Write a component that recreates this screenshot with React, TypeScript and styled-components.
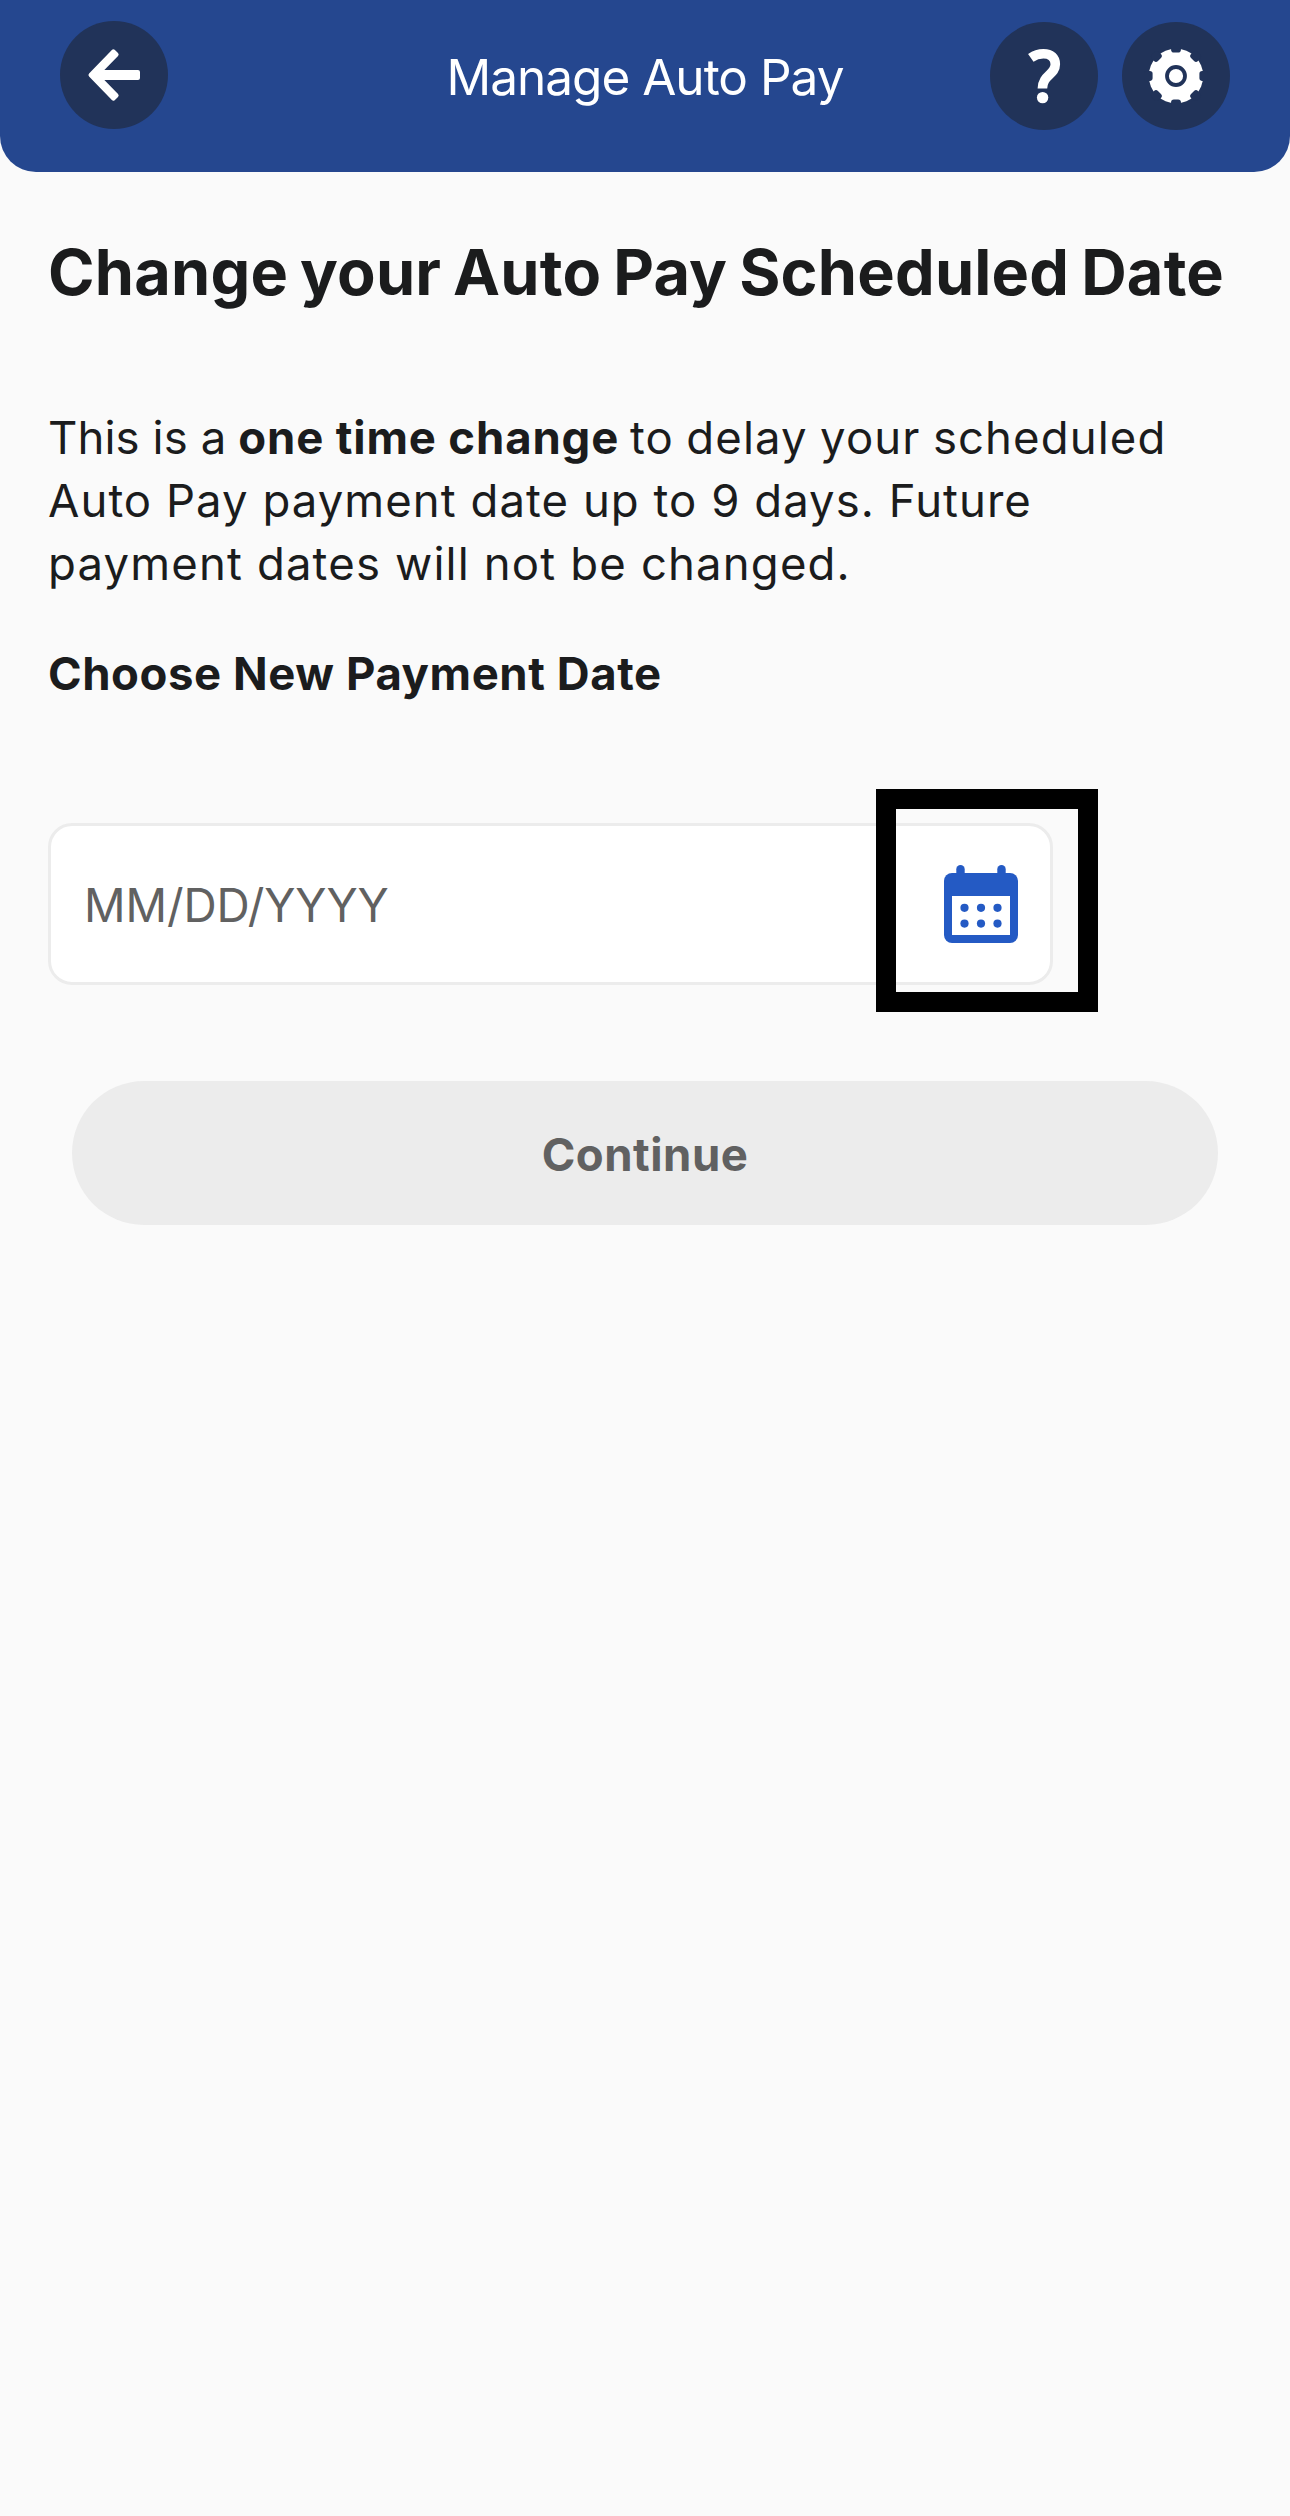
import React from 'react';
import styled, { createGlobalStyle } from 'styled-components';

const navy = '#213359';
const brand = '#25478f';
const accent = '#245ac4';
const ink = '#1b1c1d';
const muted = '#616161';
const line = '#ececec';

const GlobalStyle = createGlobalStyle`
  *, *::before, *::after { box-sizing: border-box; }
  body {
    margin: 0;
    background: #fafafa;
    color: ${ink};
    font-family: Inter, "Liberation Sans", sans-serif;
  }
  button { font: inherit; border: 0; padding: 0; cursor: pointer; }
`;

const Screen = styled.div`
  display: flex;
  flex-direction: column;
  width: 1290px;
  min-height: 2516px;
  background: #fafafa;
`;

const Header = styled.header`
  display: grid;
  grid-template-columns: 1fr auto 1fr;
  align-items: start;
  height: 172px;
  padding: 21px 60px 0;
  border-radius: 0 0 36px 36px;
  background: ${brand};
`;

const HeaderTitle = styled.h1`
  margin: 0;
  color: #fff;
  font-size: 49.5px;
  font-weight: 400;
  line-height: 112px;
  letter-spacing: -1px;
  white-space: nowrap;
`;

const HeaderActions = styled.div`
  display: flex;
  justify-content: flex-end;
  gap: 24px;
  padding-top: 1px;
`;

const RoundButton = styled.button`
  display: block;
  width: 108px;
  height: 108px;
  border-radius: 50%;
  background: ${navy};
`;

const RoundIcon = styled.svg`
  display: block;
  width: 108px;
  height: 108px;
`;

const Main = styled.main`
  display: flex;
  flex-direction: column;
  padding: 60px 48px 0;
`;

const Title = styled.h2`
  margin: 0;
  font-size: 63px;
  font-weight: 700;
  line-height: 80px;
  letter-spacing: 0.2px;
  word-spacing: -3.2px;
  white-space: nowrap;
`;

const Copy = styled.p`
  margin: 94px 0 0;
  font-size: 45.5px;
  line-height: 63px;
`;

const CopyLine = styled.span<{ $tracking: number }>`
  display: block;
  white-space: nowrap;
  letter-spacing: ${(p) => p.$tracking}px;
`;

const Strong = styled.strong`
  margin-left: -1px;
  font-weight: 700;
  letter-spacing: 0.84px;
`;

const Run = styled.span`
  margin-left: -2px;
  letter-spacing: 1.1px;
  word-spacing: -1.5px;
`;

const Label = styled.h3`
  margin: 47px 0 0;
  font-size: 45.5px;
  font-weight: 700;
  line-height: 64px;
  letter-spacing: 0.56px;
`;

const FieldWrap = styled.div`
  position: relative;
  width: 1005px;
  margin-top: 117px;
`;

const Field = styled.div`
  display: flex;
  align-items: center;
  justify-content: space-between;
  height: 162px;
  padding: 0 32px 0 33px;
  border: 3px solid ${line};
  border-radius: 24px;
  background: #fff;
`;

const Placeholder = styled.span`
  padding-top: 2px;
  color: ${muted};
  font-size: 46px;
  line-height: 64px;
  letter-spacing: -0.1px;
`;

const CalendarIcon = styled.svg`
  display: block;
  width: 74px;
  height: 78px;
`;

const Highlight = styled.div`
  position: absolute;
  top: -34px;
  left: 828px;
  width: 222px;
  height: 223px;
  border: 20px solid #000;
  pointer-events: none;
`;

const ContinueButton = styled.button`
  height: 144px;
  margin: 96px 24px 0;
  border-radius: 72px;
  background: ${line};
  && {
    padding-top: 3px;
    color: ${muted};
    font-size: 45.5px;
    font-weight: 700;
    line-height: 64px;
    letter-spacing: 0.5px;
  }
`;

const notches = [0, 45, 90, 135, 180, 225, 270, 315];
const dotColumns = [20.5, 37, 53.5];
const dotRows = [42.8, 58.6];

function BackIcon() {
  return (
    <RoundIcon viewBox="0 0 108 108" aria-hidden="true">
      <path
        d="M30.5 54 53.3 30.3 56.6 33.5 39.5 51H78V57H39.5L56.6 74.5 53.3 77.7Z"
        fill="#fff"
        stroke="#fff"
        strokeWidth="4"
        strokeLinejoin="round"
      />
    </RoundIcon>
  );
}

function HelpIcon() {
  return (
    <RoundIcon viewBox="0 0 108 108" aria-hidden="true">
      <path
        d="M40.8 35.9C45 33 49 31.8 53.4 31.8C61 31.8 65.3 35.9 65.3 42.3C65.3 53 52.4 53 52.4 66.6"
        fill="none"
        stroke="#fff"
        strokeWidth="9.6"
      />
      <circle cx="52.6" cy="75.6" r="5.7" fill="#fff" />
    </RoundIcon>
  );
}

function GearIcon() {
  return (
    <RoundIcon viewBox="0 0 108 108" aria-hidden="true">
      <circle cx="54" cy="54" r="27.2" fill="#fff" />
      {notches.map((angle) => (
        <rect
          key={angle}
          x="49.1"
          y="22"
          width="9.8"
          height="8.6"
          rx="2.8"
          fill={navy}
          transform={`rotate(${angle} 54 54)`}
        />
      ))}
      <circle cx="54" cy="54" r="9" fill="#fff" stroke={navy} strokeWidth="3.8" />
    </RoundIcon>
  );
}

export default function App() {
  return (
    <Screen>
      <GlobalStyle />
      <Header>
        <RoundButton aria-label="Back">
          <BackIcon />
        </RoundButton>
        <HeaderTitle>Manage Auto Pay</HeaderTitle>
        <HeaderActions>
          <RoundButton aria-label="Help">
            <HelpIcon />
          </RoundButton>
          <RoundButton aria-label="Settings">
            <GearIcon />
          </RoundButton>
        </HeaderActions>
      </Header>
      <Main>
        <Title>Change your Auto Pay Scheduled Date</Title>
        <Copy>
          <CopyLine $tracking={0.1}>
            This is a <Strong>one time change</Strong> <Run>to delay your scheduled</Run>
          </CopyLine>
          <CopyLine $tracking={1.04}>Auto Pay payment date up to 9 days. Future</CopyLine>
          <CopyLine $tracking={1.15}>payment dates will not be changed.</CopyLine>
        </Copy>
        <Label>Choose New Payment Date</Label>
        <FieldWrap>
          <Field>
            <Placeholder>MM/DD/YYYY</Placeholder>
            <CalendarIcon viewBox="0 0 74 78" role="img" aria-label="Open calendar">
              <rect x="12.3" y="0" width="8.4" height="16" rx="4.2" fill={accent} />
              <rect x="53.3" y="0" width="8.4" height="16" rx="4.2" fill={accent} />
              <rect x="0" y="8" width="74" height="70" rx="8" fill={accent} />
              <rect x="8" y="31" width="58" height="39" fill="#fff" />
              {dotRows.map((cy) =>
                dotColumns.map((cx) => (
                  <circle key={`${cx}-${cy}`} cx={cx} cy={cy} r="4.1" fill={accent} />
                ))
              )}
            </CalendarIcon>
          </Field>
          <Highlight />
        </FieldWrap>
        <ContinueButton>Continue</ContinueButton>
      </Main>
    </Screen>
  );
}
